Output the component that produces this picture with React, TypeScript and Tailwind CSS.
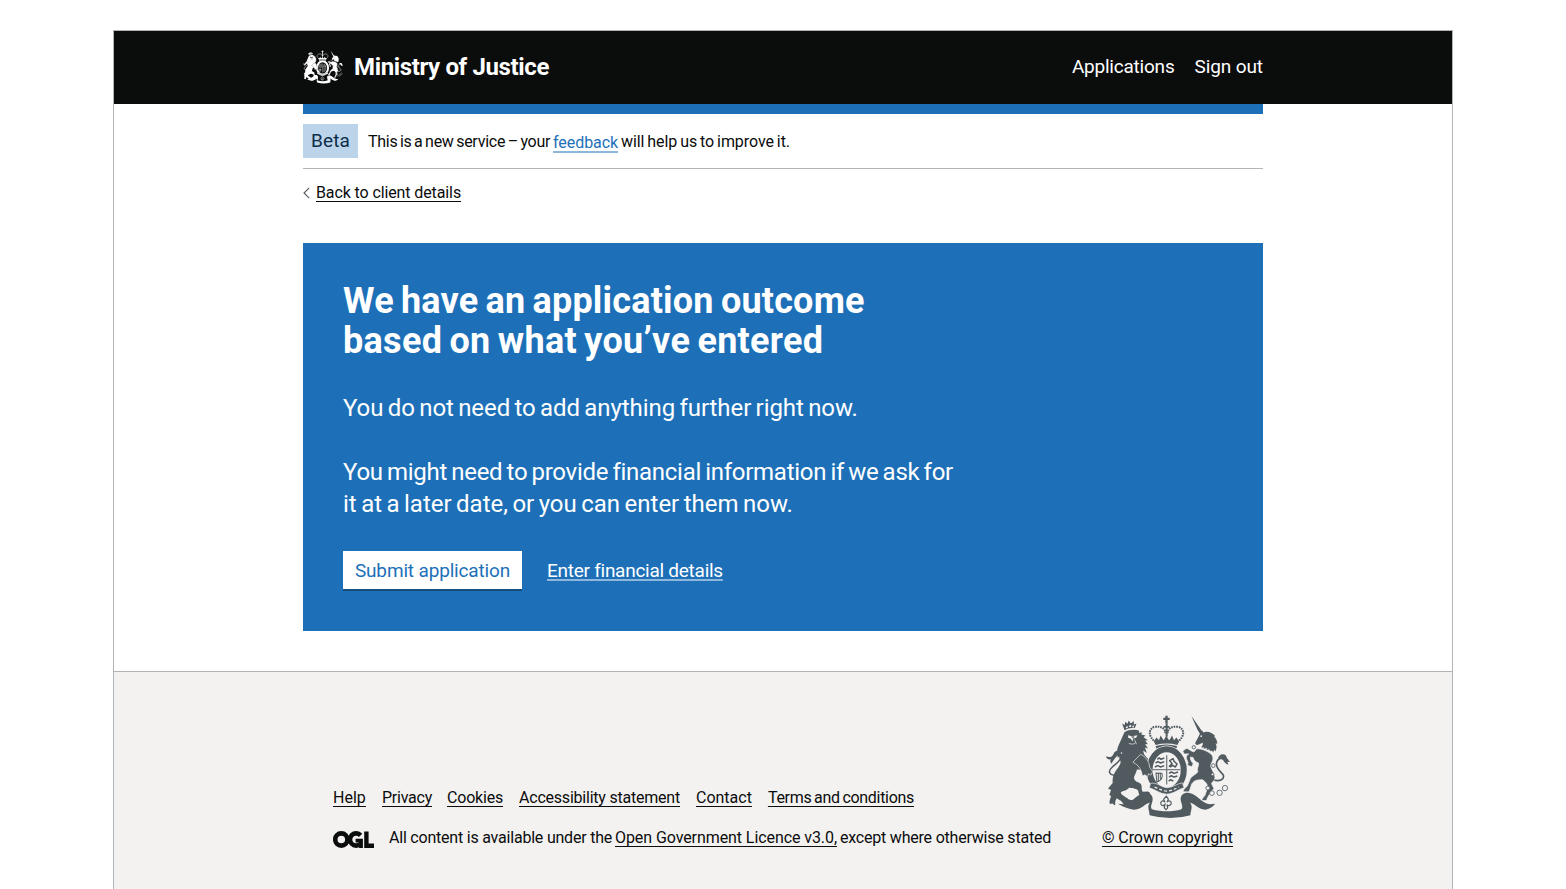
import type { ReactNode } from "react";

function RoyalArms({ className, ground }: { className: string; ground: string }) {
  return (
    <svg viewBox="33 32 370 308" className={className} fill="currentColor" stroke="none" aria-label="Royal coat of arms">
      {/* crown */}
      <path d="M210 33h7v6h6v7h-6v10h-7V46h-6v-7h6z" />
      <g fill="none" stroke="currentColor" strokeWidth="6" strokeDasharray="5 2.5">
        <path d="M182 112C158 96 158 70 180 66c16-2 27 4 30 14" />
        <path d="M245 112c24-16 24-42 2-46-16-2-27 4-30 14" />
      </g>
      <path d="M211 56h6v40h-6zM205 64h17v5h-17zM207 80h13v5h-13z" />
      <path d="M176 109l8-11 7 8 5-14 6 10 3 4 8-13 8 13 4-4 5-10 6 14 7-8 8 11-5 11q-32-8-65 0z" />
      <path d="M181 123q32-9 64 0l-2 8q-30-8-60 0z" />
      {/* lion */}
      <path d="M86 70l-5-14 8 5 1-10 7 6 4-10 6 9 9-7 0 10 8-3-5 14q-17-2-31 6z" />
      <path fill={ground} d="M92 67l6-3v5l-5 2zM102 62l6-1v6h-6zM112 62l5 1-1 5h-4z" />
      <path d="M88 82c12-8 32-9 44-4l-1 6 10-1-3 6 13 3-6 5 13 9-8 1 8 11-8-1 8 14-9-3 6 16-11-7c1 8 3 13 8 18l17 18-14 32c-10-9-25-13-30-11-3 14-10 19-8 27 4 11 14 9 20 16 5 9 0 17 6 23l15-1c8 2 8 10 4 14l-6-1-3 5-6-5-4 4c-11-2-13-12-14-20-7-7-22-7-27-8-7 9-22 9-25 15 1 7 17 13 24 20l10 2c4 4 2 10-2 12l-6-3-2 6-6-3-4 3c-8-3-10-13-17-15l-9-6c-3 6-6 11-4 18l-2 3-8-6-5 3c-6-6 0-16 2-24l-5-4 5-14-9-5 14-16c-2-21 7-35 16-46 5-8 9-14 7-19l-4-14-4 4-1-14c5 0 10 3 14 1 2-9-8-5-13-8-4-5 1-9 1-13z" />
      <path fill={ground} d="M99 91l11 3 17-3-4 8-9 2-2 9-5-8-8-3z" />
      <path d="M108 95l10-1-4 7z" />
      <path fill="none" stroke={ground} strokeWidth="2" d="M101 116l12 2 8-4M118 104l6 14" />
      <path fill="none" stroke="currentColor" strokeWidth="4.5" d="M70 210c-30 4-32-12-18-24 17-15 28-22 25-36-2-9-13-8-15 0" />
      <path d="M84 139c-14-7-27 0-29 9-4 10-14 10-22 6 2 9 9 11 15 9-4 5-2 9 1 13 12-18 20-28 35-37z" />
      {/* unicorn */}
      <path d="M288 34l28 40 8 13-8 4-10-16z" />
      <path d="M314 85l6-9 3 7c13-5 27 0 36 11l-4 1c7 5 10 13 10 22l-5-2c4 8 4 17-1 25l-3-6-3 8c-13-6-27-10-36-14 4-6 7-10 4-14-5 1-13 9-20 5-4-4 0-9 4-16z" />
      <circle cx="317" cy="94" r="2.500" fill={ground} />
      <path fill="none" stroke={ground} strokeWidth="3" strokeDasharray="6 3" d="M303 125q26 3 50 17" />
      {/* ribbon */}
      <path d="M68 296l17 1c25-2 41-31 64-34 16-1 25 9 23 22-2 12-8 19-2 27 29 8 62 8 88 0 6-8 0-15-2-27-2-13 7-23 23-22 24 3 40 32 63 34l17-1c-8 10-22 19-34 17-18-3-27-17-41-21 10 15 0 25 1 38q-59 17-122 0c0-14-9-23 1-38-15 4-23 18-42 21-14 2-36-7-54-17z" />
      <g transform="translate(27 24)">
        <path fill="none" stroke="currentColor" strokeWidth="5" d="M326 200c20 7 34-2 30-14-4-9-24-18-20-37 4-14 16-16 22-8" />
        <path d="M340 137c3-13 15-17 24-9 2 8 5 10 12 19l-8-1 3 9c-9-3-14-8-16-16-5-5-10-6-15-2z" />
        <path stroke={ground} strokeWidth="2" d="M276 108c16-2 36 8 46 18 8 14-2 22-4 32 2 12 12 20 13 34 1 12-9 14-10 20l7 14-10 12c-4 8-10 14-12 24h-14c0-8 10-12 11-20l5-16c4-12-6-20-14-26-8 0-16 0-24 4l-8 8-8 24h-18c2-10 10-12 14-20l8-20c4-8 18-12 22-20-4-10 4-18 2-26-8-2-14-8-16-16l-8-2c-2 8 4 14 8 20l-4 9-13-4 2-9c-6-10-8-20 2-25l-14 0-4-9 12-8 14 8c10 6 10 1 17-11z" />
        <g fill={ground} stroke="currentColor" strokeWidth="2.5">
          <circle cx="268" cy="103" r="5" />
          <circle cx="326" cy="158" r="5.500" />
          <circle cx="324" cy="184" r="4" />
          <circle cx="310" cy="225" r="6" />
          <circle cx="322" cy="240" r="7" />
          <circle cx="345" cy="239" r="8" />
          <circle cx="361" cy="225" r="8" />
        </g>
      </g>
      {/* garter and shield */}
      <ellipse cx="214" cy="195" rx="62" ry="73" fill={ground} />
      <ellipse cx="214" cy="195" rx="51" ry="62" fill={ground} stroke="currentColor" strokeWidth="18" />
      <path d="M212 151h4v87h-4zM173 192h82v4h-82z" opacity=".75" />
      <g fill="none" stroke="currentColor" strokeWidth="4.5" strokeLinejoin="round">
        <path d="M186 163l6-4 5 4 10-4M181 174l7-4 8 4 11-4M179 186l8-4 9 4 11-4" />
        <path d="M221 205l7-4 8 4 12-4M221 216l7-4 8 4 10-3M220 228l6-4 8 4" />
        <path d="M221 185l9-9-7-9 10-6 3 8 9 8-5 9-8-5-8 5" />
        <path d="M182 204l18 1c4 14-5 22-15 26zM189 205v22M195 206v15" strokeWidth="3" />
      </g>
      <path stroke={ground} strokeWidth="2" d="M166 235c18-4 30 10 48 13 20-1 30-12 47-15l5 15c-18 5-33 19-53 19-19-1-35-15-51-19z" />
      <path fill="none" stroke={ground} strokeWidth="3.500" strokeDasharray="9 6" d="M178 246c13 5 22 11 36 12 13 0 23-6 36-12" />
      {/* lion's foreleg */}
      <path stroke={ground} strokeWidth="2" d="M136 148c14 6 26 20 27 38l9 14-5 10-7-4-3 9-8-6-7 4-3-12c-4-14-14-24-26-29z" />
      {/* floral badge */}
      <path fill={ground} stroke="currentColor" strokeWidth="3.500" d="M213 273l6 9-4 9c7-8 15-2 12 6-4 6-9 5-12 1l2 10-5 5-5-5 2-10c-4 4-9 5-12-1-3-8 5-14 12-6l-4-9z" />
    </svg>
  );
}

function OglLogo() {
  return (
    <svg viewBox="0 0 41 17" className="relative top-px h-[17px] w-[41px] shrink-0" fill="none" stroke="#0b0c0c" strokeWidth="4.6" aria-label="OGL">
      <circle cx="8.3" cy="8.5" r="6.1" />
      <path d="M27.6 4.400A6.100 6.100 0 1 0 27.400 12.800" />
      <path d="M22.600 9.600H28V17" strokeWidth="3.800" />
      <path d="M33.400 .6V14.800H41" strokeWidth="4.400" />
    </svg>
  );
}

const line = "underline decoration-1 underline-offset-[3px] [text-decoration-skip-ink:none]";

function FooterLink({ children, className = "" }: { children: ReactNode; className?: string }) {
  return <a href="#" className={`whitespace-nowrap ${line} ${className}`}>{children}</a>;
}

export default function App() {
  return (
    <div className="h-[889px] overflow-hidden bg-white pt-[30px] font-['Roboto','Liberation_Sans',sans-serif] text-[16px] text-[#0b0c0c]">
      <div className="ml-[113px] flex h-[900px] w-[1340px] flex-col border border-[#b1b4b6]">
        <header className="h-[73px] shrink-0 bg-[#0b0c0c] text-white">
          <div className="mx-auto flex h-[72px] w-[960px] items-center whitespace-nowrap">
            <RoyalArms className="h-[34px] w-[40px]" ground="#0b0c0c" />
            <span className="ml-[11px] text-[24px] font-bold leading-[30px] tracking-[-0.36px]">Ministry of Justice</span>
            <nav className="mb-[2px] ml-auto flex gap-5 text-[19px] leading-[25px]">
              <a href="#" className="tracking-[-0.22px]">Applications</a>
              <a href="#" className="tracking-[-0.1px]">Sign out</a>
            </nav>
          </div>
        </header>

        <main className="mx-auto w-[960px] shrink-0">
          <div className="h-[10px] bg-[#1d70b8]" />
          <div className="flex h-[55px] items-center border-b border-[#b1b4b6] whitespace-nowrap">
            <strong className="h-[34px] w-[55px] bg-[#bbd4ea] text-center text-[19px] font-normal leading-[33px] tracking-[0.1px] text-[#0c2d4a]">Beta</strong>
            <p className="ml-[10px] mt-[2px] flex leading-5">
              <span className="w-[185px] tracking-[-0.26px] [word-spacing:-1.2px]">This is a new service – your</span>
              <a href="#" className="relative top-px w-[65px] tracking-[-0.06px] text-[#1d70b8] underline decoration-[#8eb7db] decoration-2 underline-offset-[3px] [text-decoration-skip-ink:none]">feedback</a>
              <span className="ml-[3px] tracking-[-0.06px] [word-spacing:-1px]">will help us to improve it.</span>
            </p>
          </div>

          <a href="#" className="mt-[14px] flex h-5 w-fit items-center">
            <svg viewBox="0 0 7 12" className="mr-[6px] h-[12px] w-[7px]" fill="none" stroke="#505a5f" strokeWidth="1.1">
              <path d="M6.2 .8L1 6l5.200 5.200" />
            </svg>
            <span className={`leading-5 tracking-[-0.11px] ${line}`}>Back to client details</span>
          </a>

          <section className="mt-[40px] h-[388px] bg-[#1d70b8] px-10 pt-[38px] text-white">
            <h1 className="text-[36px] font-bold leading-10 tracking-[0.2px] [word-spacing:-2px]">
              We have an application outcome
              <br />
              <span className="tracking-[0.3px]">based on what you’ve entered</span>
            </h1>
            <p className="mt-[31px] text-[24px] leading-8 tracking-[-0.07px] [word-spacing:-1.5px]">
              You do not need to add anything further right now.
            </p>
            <p className="mt-8 text-[24px] leading-8 [word-spacing:-1.5px]">
              <span className="tracking-[-0.27px]">You might need to provide financial information if we ask for</span>
              <br />
              <span>it at a later date, or you can enter them now.</span>
            </p>
            <div className="mt-[31px] flex text-[19px]">
              <button className="h-[38px] w-[179px] bg-white text-center leading-[39px] tracking-[-0.16px] text-[#1d70b8] shadow-[0_2px_0_#144e81]">
                Submit application
              </button>
              <a href="#" className="ml-[25px] leading-[39px] tracking-[-0.26px] underline decoration-[#8eb7db] decoration-2 underline-offset-[2px] [text-decoration-skip-ink:none]">
                Enter financial details
              </a>
            </div>
          </section>
        </main>

        <footer className="mt-10 grow border-t border-[#b1b4b6] bg-[#f3f2f1]">
          <div className="mx-auto flex w-[900px] justify-between pt-[43px]">
            <div className="pt-[73px]">
              <nav className="flex leading-5">
                <FooterLink className="w-[49px] no-underline"><span className={line}>Help</span></FooterLink>
                <FooterLink className="mr-[15px] tracking-[-0.24px]">Privacy</FooterLink>
                <FooterLink className="mr-4 tracking-[-0.2px]">Cookies</FooterLink>
                <FooterLink className="mr-4 tracking-[-0.22px]">Accessibility statement</FooterLink>
                <FooterLink className="mr-4">Contact</FooterLink>
                <FooterLink className="tracking-[-0.3px] [word-spacing:-1px]">Terms and conditions</FooterLink>
              </nav>
              <div className="mt-5 flex items-center whitespace-nowrap leading-5">
                <OglLogo />
                <span className="ml-[15px] w-[226px] tracking-[-0.21px]">All content is available under the</span>
                <FooterLink className="w-[222px] tracking-[-0.08px]">Open Government Licence v3.0,</FooterLink>
                <span className="ml-[3px] tracking-[-0.21px]">except where otherwise stated</span>
              </div>
            </div>
            <div className="flex w-[131px] flex-col items-center">
              <RoyalArms className="ml-px h-[104px] w-[124px] text-[#505a5f]" ground="#f3f2f1" />
              <FooterLink className="mt-[9px] leading-5 tracking-[-0.09px]">© Crown copyright</FooterLink>
            </div>
          </div>
        </footer>
      </div>
    </div>
  );
}
